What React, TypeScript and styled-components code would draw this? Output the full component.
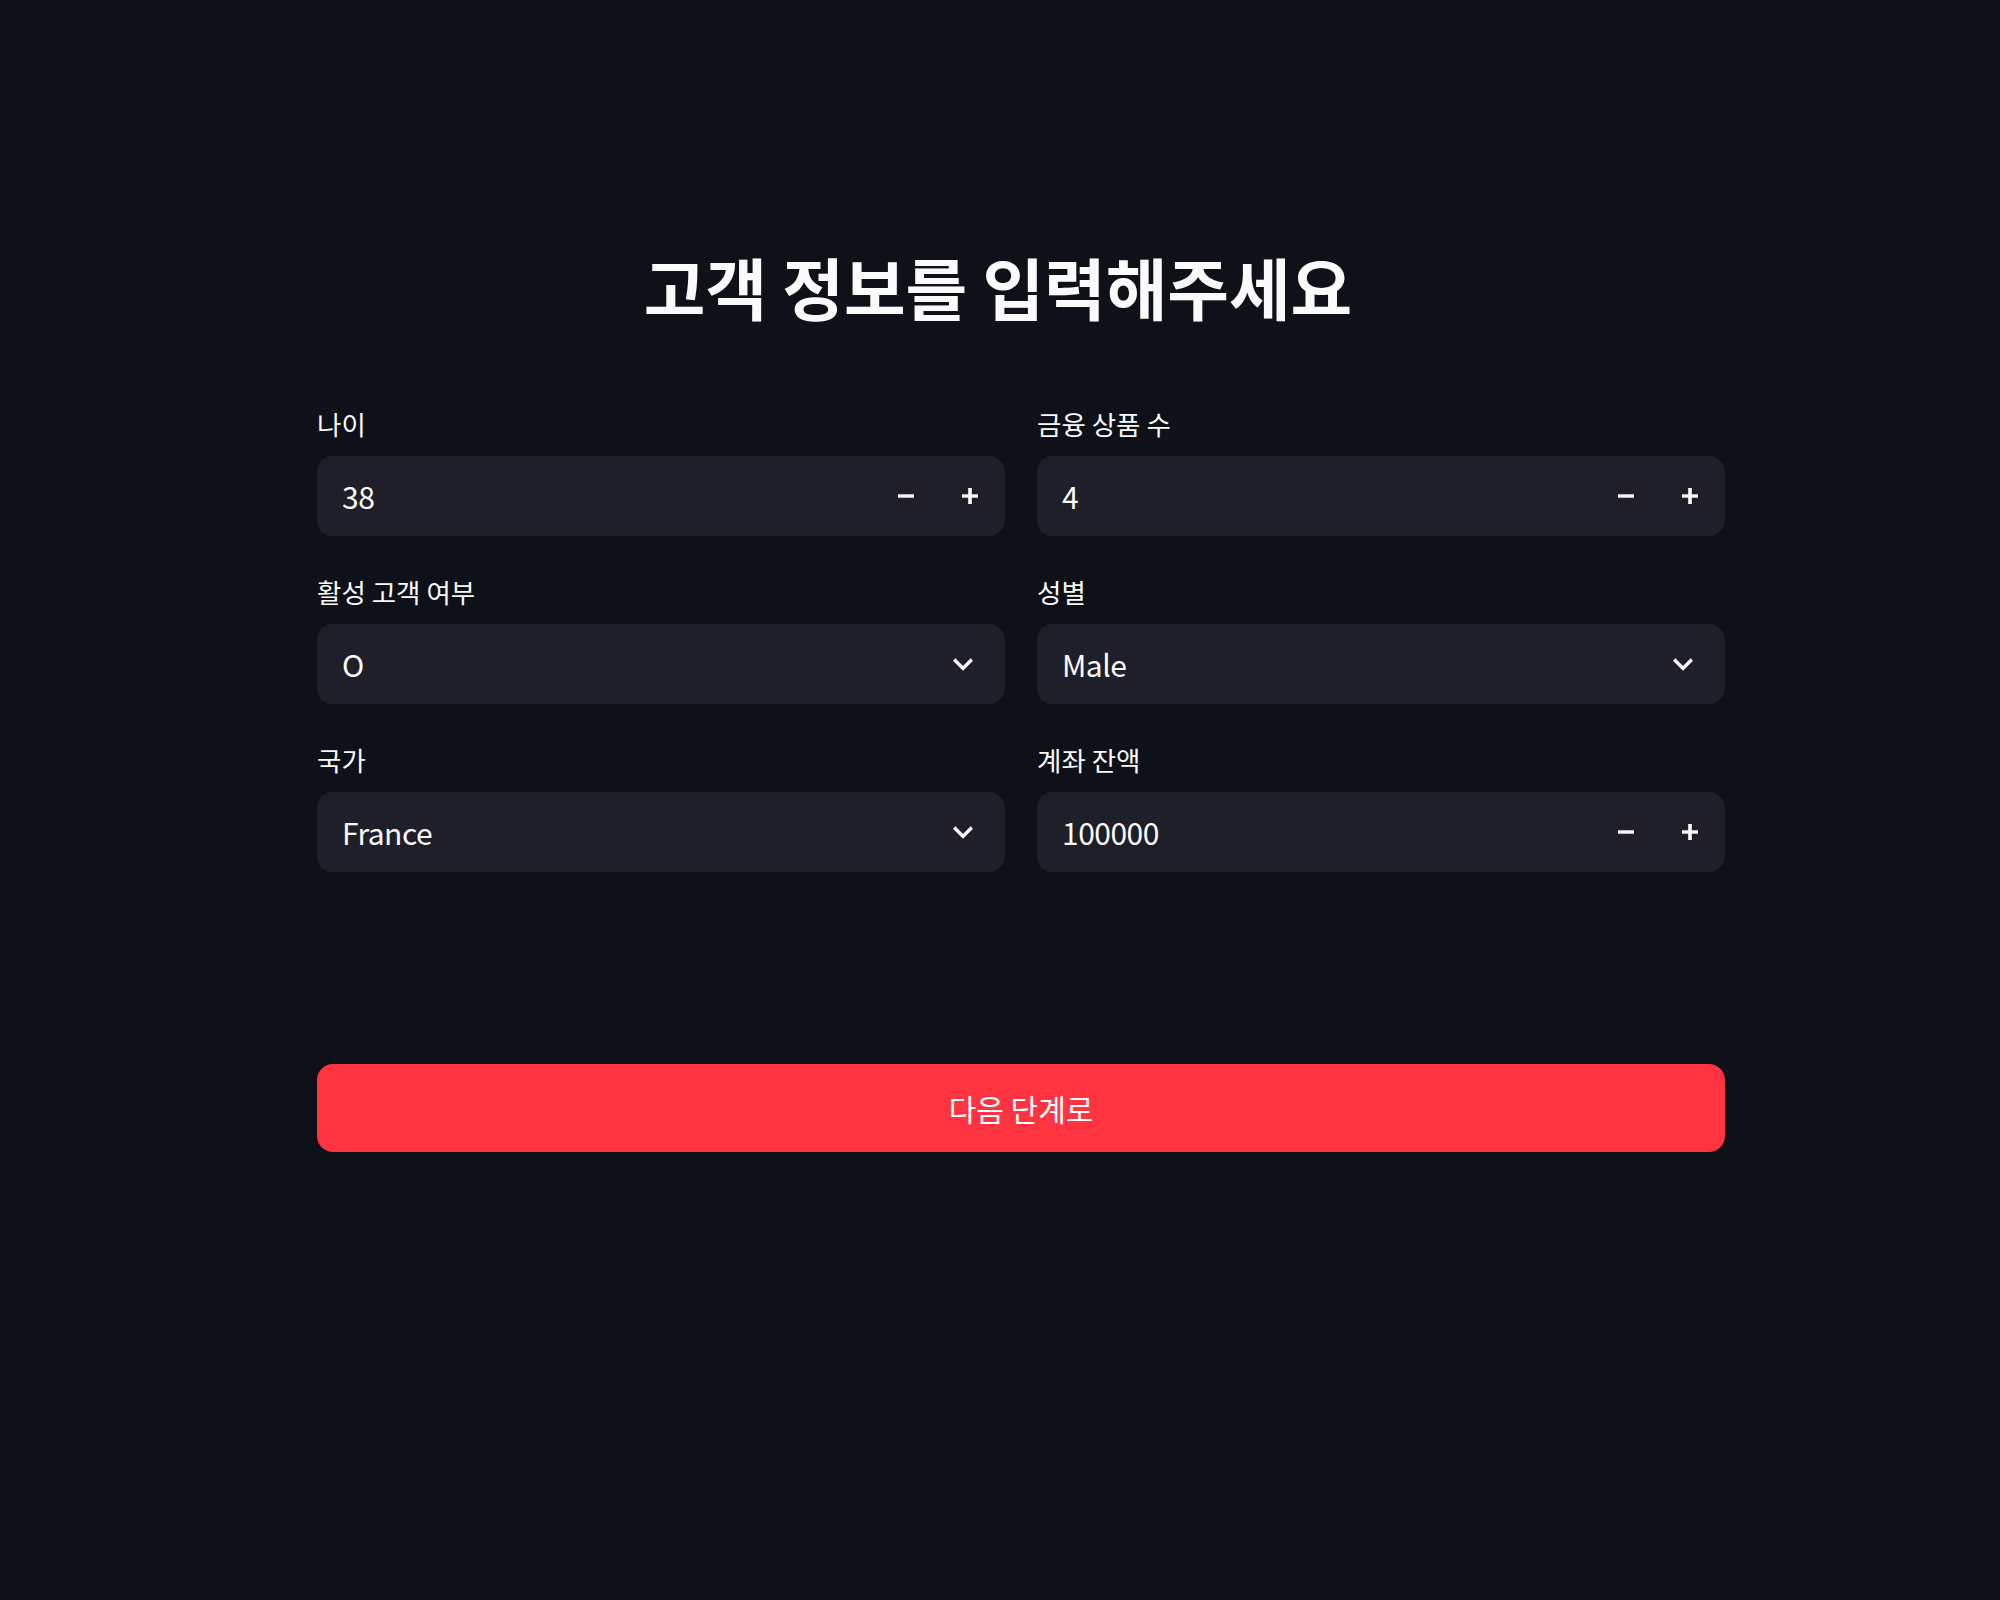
import React from "react";
import styled, { createGlobalStyle } from "styled-components";

const GlobalStyle = createGlobalStyle`
  html, body {
    margin: 0;
    padding: 0;
    background: #0e1117;
  }
  body {
    font-family: "Noto Sans CJK KR", "Noto Sans", sans-serif;
    color: #fafafa;
  }
  * { box-sizing: border-box; }
`;

const Page = styled.main`
  min-height: 1600px;
  padding-top: 246px;
  display: flex;
  flex-direction: column;
  align-items: center;
`;

const Title = styled.h1`
  margin: 0 0 74px -4px;
  font-size: 67px;
  line-height: 80px;
  font-weight: 700;
  color: #fafafa;
`;

const Form = styled.div`
  width: 1408px;
  align-self: flex-start;
  margin-left: 317px;
  display: flex;
  flex-direction: column;
`;

const FieldGrid = styled.div`
  display: grid;
  grid-template-columns: 1fr 1fr;
  column-gap: 32px;
  row-gap: 32px;
`;

const Field = styled.div`
  display: flex;
  flex-direction: column;
`;

const Label = styled.label`
  font-size: 26.5px;
  line-height: 48px;
  padding-bottom: 8px;
  color: #fafafa;
`;

const InputBox = styled.div`
  height: 80px;
  background: #1e1f28;
  border-radius: 16px;
  display: flex;
  align-items: center;
  padding-left: 25px;
`;

const Value = styled.span`
  flex: 1;
  font-size: 30px;
  letter-spacing: -0.5px;
  line-height: 80px;
  color: #fafafa;
`;

const Steppers = styled.div`
  display: flex;
  margin-right: 3px;
`;

const StepButton = styled.button`
  width: 64px;
  height: 80px;
  background: transparent;
  border: none;
  padding: 0;
  display: flex;
  align-items: center;
  justify-content: center;
  cursor: pointer;
`;

const ChevronWrap = styled.span`
  width: 40px;
  height: 40px;
  margin-right: 22px;
  display: flex;
  align-items: center;
  justify-content: center;
`;

const SubmitButton = styled.button`
  margin-top: 192px;
  height: 88px;
  width: 100%;
  border: none;
  border-radius: 16px;
  background: #ff3440;
  color: #ffffff;
  font-family: "Noto Sans CJK KR", "Noto Sans", sans-serif;
  font-size: 30px;
  font-weight: 400;
  cursor: pointer;
`;

const MinusIcon = () => (
  <svg width="16" height="16" viewBox="0 0 16 16">
    <rect x="0" y="6.3" width="16" height="3.4" fill="#fafafa" />
  </svg>
);

const PlusIcon = () => (
  <svg width="16" height="16" viewBox="0 0 16 16">
    <rect x="0" y="6.3" width="16" height="3.4" fill="#fafafa" />
    <rect x="6.2" y="0" width="3.6" height="16" fill="#fafafa" />
  </svg>
);

const Chevron = () => (
  <svg width="40" height="40" viewBox="0 0 24 24">
    <path
      d="M7.41 8.59L12 13.17l4.59-4.58L18 10l-6 6-6-6 1.41-1.41z"
      fill="#fafafa"
    />
  </svg>
);

type NumberFieldProps = { label: string; value: string };
const NumberField = ({ label, value }: NumberFieldProps) => (
  <Field>
    <Label>{label}</Label>
    <InputBox>
      <Value>{value}</Value>
      <Steppers>
        <StepButton aria-label="decrement">
          <MinusIcon />
        </StepButton>
        <StepButton aria-label="increment">
          <PlusIcon />
        </StepButton>
      </Steppers>
    </InputBox>
  </Field>
);

type SelectFieldProps = { label: string; value: string };
const SelectField = ({ label, value }: SelectFieldProps) => (
  <Field>
    <Label>{label}</Label>
    <InputBox>
      <Value>{value}</Value>
      <ChevronWrap>
        <Chevron />
      </ChevronWrap>
    </InputBox>
  </Field>
);

export default function App() {
  return (
    <>
      <GlobalStyle />
      <Page>
        <Title>고객 정보를 입력해주세요</Title>
        <Form>
          <FieldGrid>
            <NumberField label="나이" value="38" />
            <NumberField label="금융 상품 수" value="4" />
            <SelectField label="활성 고객 여부" value="O" />
            <SelectField label="성별" value="Male" />
            <SelectField label="국가" value="France" />
            <NumberField label="계좌 잔액" value="100000" />
          </FieldGrid>
          <SubmitButton>다음 단계로</SubmitButton>
        </Form>
      </Page>
    </>
  );
}
